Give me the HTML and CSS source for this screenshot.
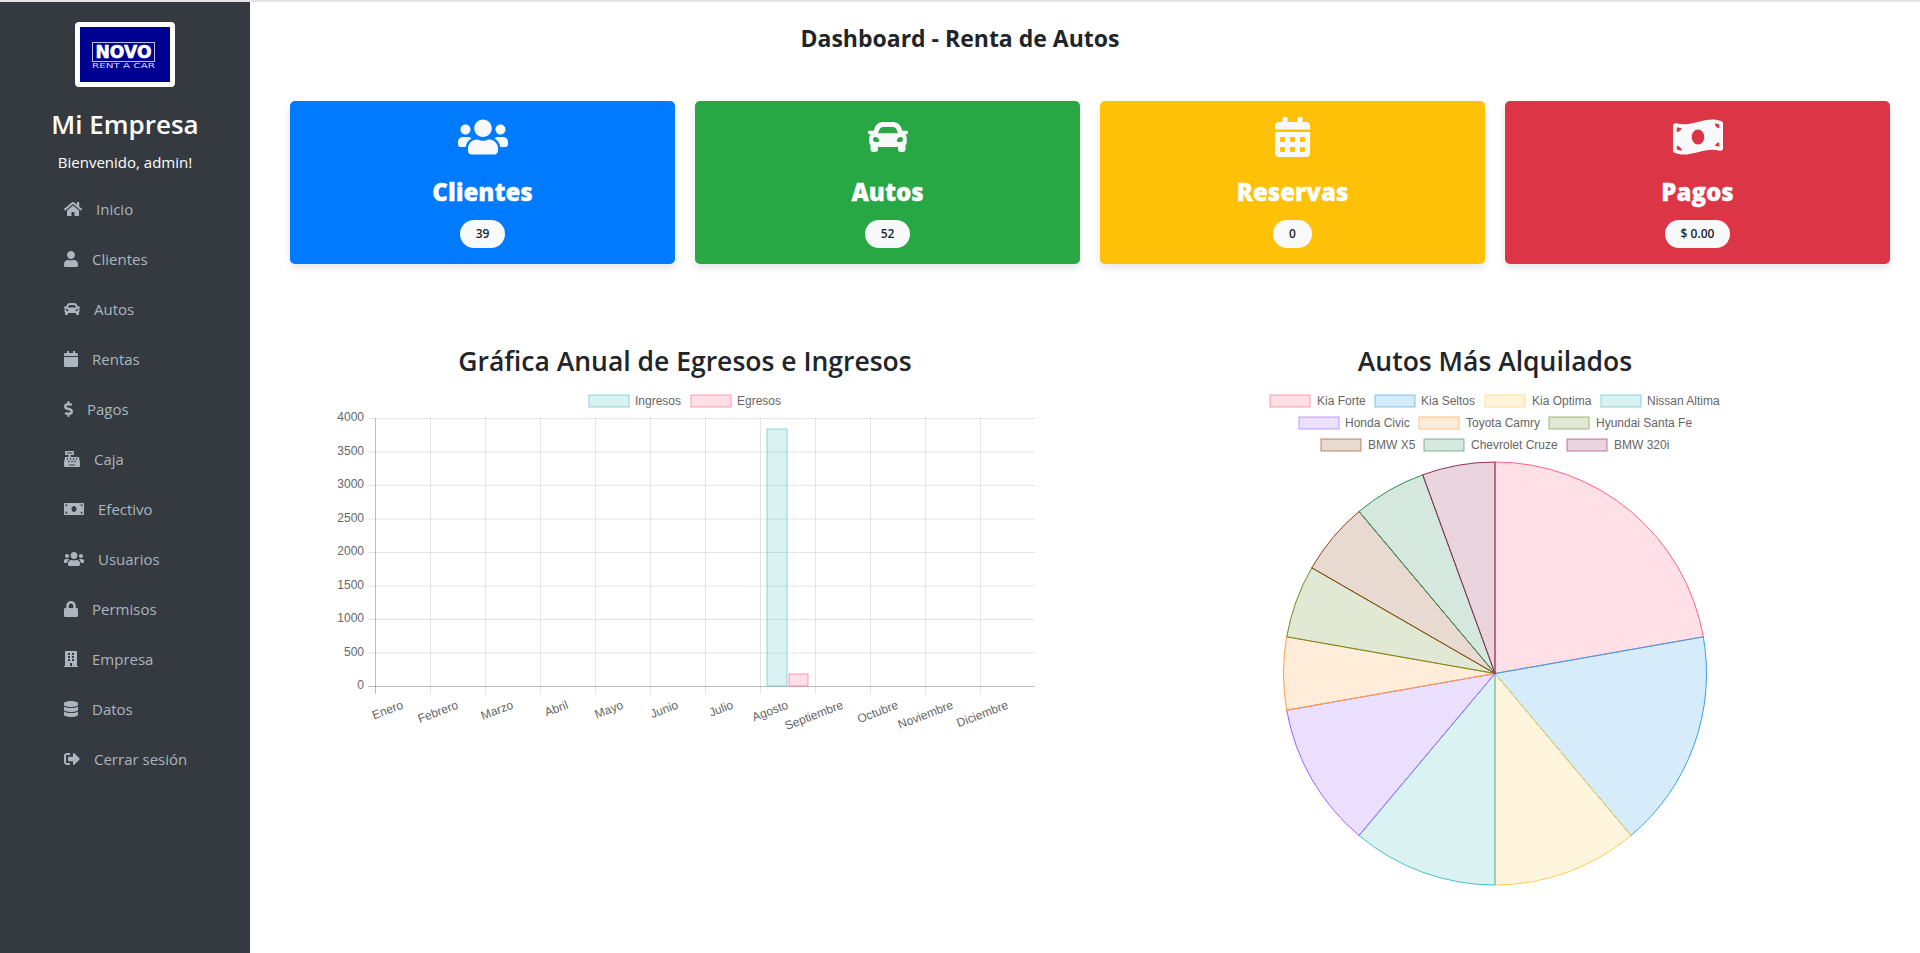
FILE: index.html
```html
<!DOCTYPE html>
<html lang="es">
    <head>
        <meta charset="UTF-8">
        <title>Dashboard - Renta de Autos</title>
        <meta name="viewport" content="width=device-width, initial-scale=1.0">
        <link rel="stylesheet" href="styles.css">
    </head>
    <body>
        <!-- icon paths, used from the sidebar and the cards -->
        <svg class="icon-defs" aria-hidden="true">
            <defs>
                <path id="i-home" d="M280.37 148.26L96 300.11V464a16 16 0 0 0 16 16l112.06-.29a16 16 0 0 0 15.92-16V368a16 16 0 0 1 16-16h64a16 16 0 0 1 16 16v95.64a16 16 0 0 0 16 16.05L464 480a16 16 0 0 0 16-16V300L295.67 148.26a12.19 12.19 0 0 0-15.3 0zM571.6 251.47L488 182.56V44.05a12 12 0 0 0-12-12h-56a12 12 0 0 0-12 12v72.61L318.47 43a48 48 0 0 0-61 0L4.34 251.47a12 12 0 0 0-1.6 16.9l25.5 31A12 12 0 0 0 45.15 301l235.22-193.74a12.19 12.19 0 0 1 15.3 0L530.9 301a12 12 0 0 0 16.9-1.6l25.5-31a12 12 0 0 0-1.7-16.93z"/>
                <path id="i-user" d="M224 256c70.7 0 128-57.3 128-128S294.7 0 224 0 96 57.3 96 128s57.3 128 128 128zm89.6 32h-16.7c-22.2 10.2-46.9 16-72.9 16s-50.6-5.8-72.9-16h-16.7C60.2 288 0 348.2 0 422.4V464c0 26.5 21.5 48 48 48h352c26.5 0 48-21.5 48-48v-41.6c0-74.2-60.2-134.4-134.4-134.4z"/>
                <path id="i-car" d="M499.99 176h-59.87l-16.64-41.6C406.38 91.63 365.57 64 319.5 64h-127c-46.06 0-86.88 27.63-103.99 70.4L71.87 176H12.01C4.2 176-1.53 183.34.37 190.91l6 24C7.7 220.25 12.5 224 18.01 224h20.07C24.65 235.73 16 252.78 16 272v48c0 16.12 6.16 30.67 16 41.93V416c0 17.67 14.33 32 32 32h32c17.67 0 32-14.33 32-32v-32h256v32c0 17.67 14.33 32 32 32h32c17.67 0 32-14.33 32-32v-54.07c9.84-11.25 16-25.8 16-41.93v-48c0-19.22-8.65-36.27-22.07-48H494c5.51 0 10.31-3.75 11.64-9.09l6-24c1.89-7.57-3.84-14.91-11.65-14.91zm-352.06-17.83c7.29-18.22 24.94-30.17 44.57-30.17h127c19.63 0 37.28 11.95 44.57 30.17L384 208H128l19.93-49.83zM96 319.8c-19.2 0-32-12.76-32-31.9S76.8 256 96 256s48 28.71 48 47.85-28.8 15.95-48 15.95zm320 0c-19.2 0-48 3.19-48-15.95S396.8 256 416 256s32 12.76 32 31.9-12.8 31.9-32 31.9z"/>
                <path id="i-calendar" d="M12 192h424c6.6 0 12 5.4 12 12v260c0 26.5-21.5 48-48 48H48c-26.5 0-48-21.5-48-48V204c0-6.6 5.4-12 12-12zm436-44v-36c0-26.5-21.5-48-48-48h-48V12c0-6.6-5.4-12-12-12h-40c-6.6 0-12 5.4-12 12v52H160V12c0-6.6-5.4-12-12-12h-40c-6.6 0-12 5.4-12 12v52H48C21.5 64 0 85.5 0 112v36c0 6.6 5.4 12 12 12h424c6.6 0 12-5.4 12-12z"/>
                <path id="i-calendar-alt" d="M0 464c0 26.5 21.5 48 48 48h352c26.5 0 48-21.5 48-48V192H0v272zm320-196c0-6.6 5.4-12 12-12h40c6.6 0 12 5.4 12 12v40c0 6.6-5.4 12-12 12h-40c-6.6 0-12-5.4-12-12v-40zm0 128c0-6.6 5.4-12 12-12h40c6.6 0 12 5.4 12 12v40c0 6.6-5.4 12-12 12h-40c-6.6 0-12-5.4-12-12v-40zM192 268c0-6.6 5.4-12 12-12h40c6.6 0 12 5.4 12 12v40c0 6.6-5.4 12-12 12h-40c-6.6 0-12-5.4-12-12v-40zm0 128c0-6.6 5.4-12 12-12h40c6.6 0 12 5.4 12 12v40c0 6.6-5.4 12-12 12h-40c-6.6 0-12-5.4-12-12v-40zM64 268c0-6.6 5.4-12 12-12h40c6.6 0 12 5.4 12 12v40c0 6.6-5.4 12-12 12H76c-6.6 0-12-5.4-12-12v-40zm0 128c0-6.6 5.4-12 12-12h40c6.6 0 12 5.4 12 12v40c0 6.6-5.4 12-12 12H76c-6.6 0-12-5.4-12-12v-40zM400 64h-48V16c0-8.8-7.2-16-16-16h-32c-8.8 0-16 7.2-16 16v48H160V16c0-8.8-7.2-16-16-16h-32c-8.8 0-16 7.2-16 16v48H48C21.5 64 0 85.5 0 112v48h448v-48c0-26.5-21.5-48-48-48z"/>
                <path id="i-dollar" d="M209.2 233.4l-108-31.6C88.7 198.2 80 186.5 80 173.5c0-16.3 13.2-29.5 29.5-29.5h66.3c12.2 0 24.2 3.7 34.2 10.5 6.1 4.1 14.3 3.1 19.5-2l34.8-34c7.1-6.9 6.1-18.4-1.8-24.5C238 74.8 207.4 64.1 176 64V16c0-8.8-7.2-16-16-16h-32c-8.8 0-16 7.2-16 16v48h-2.5C45.8 64-5.4 118.7.5 183.6c4.2 46.1 39.4 83.6 83.8 96.6l102.5 30c12.5 3.7 21.2 15.3 21.2 28.3 0 16.3-13.2 29.5-29.5 29.5h-66.3C100 368 88 364.3 78 357.5c-6.1-4.1-14.3-3.1-19.5 2l-34.8 34c-7.1 6.9-6.1 18.4 1.8 24.5 24.5 19.2 55.1 29.9 86.5 30v48c0 8.8 7.2 16 16 16h32c8.8 0 16-7.2 16-16v-48.2c46.6-.9 90.3-28.6 105.7-72.7 21.5-61.6-14.6-124.8-72.5-141.7z"/>
                <path id="i-register" d="M511.1 378.8l-26.7-160c-2.6-15.4-15.9-26.7-31.6-26.7H208v-64h96c8.8 0 16-7.2 16-16V16c0-8.8-7.2-16-16-16H48c-8.8 0-16 7.2-16 16v96c0 8.8 7.2 16 16 16h96v64H59.1c-15.6 0-29 11.3-31.6 26.7L.8 378.7c-.6 3.5-.9 7-.9 10.5V480c0 17.7 14.3 32 32 32h448c17.7 0 32-14.3 32-32v-90.7c.1-3.5-.2-7-.8-10.5zM280 248c0-8.8 7.2-16 16-16h16c8.8 0 16 7.2 16 16v16c0 8.8-7.2 16-16 16h-16c-8.8 0-16-7.2-16-16v-16zm-32 64h16c8.8 0 16 7.2 16 16v16c0 8.8-7.2 16-16 16h-16c-8.8 0-16-7.2-16-16v-16c0-8.8 7.2-16 16-16zm-32-80c8.8 0 16 7.2 16 16v16c0 8.8-7.2 16-16 16h-16c-8.8 0-16-7.2-16-16v-16c0-8.8 7.2-16 16-16h16zM80 80V48h192v32H80zm40 200h-16c-8.8 0-16-7.2-16-16v-16c0-8.8 7.2-16 16-16h16c8.8 0 16 7.2 16 16v16c0 8.8-7.2 16-16 16zm16 64v-16c0-8.8 7.2-16 16-16h16c8.8 0 16 7.2 16 16v16c0 8.8-7.2 16-16 16h-16c-8.8 0-16-7.2-16-16zm216 112c0 4.4-3.6 8-8 8H168c-4.4 0-8-3.6-8-8v-16c0-4.4 3.6-8 8-8h176c4.4 0 8 3.6 8 8v16zm24-112c0 8.8-7.2 16-16 16h-16c-8.8 0-16-7.2-16-16v-16c0-8.8 7.2-16 16-16h16c8.8 0 16 7.2 16 16v16zm48-80c0 8.8-7.2 16-16 16h-16c-8.8 0-16-7.2-16-16v-16c0-8.8 7.2-16 16-16h16c8.8 0 16 7.2 16 16v16z"/>
                <path id="i-money" d="M608 64H32C14.33 64 0 78.33 0 96v320c0 17.67 14.33 32 32 32h576c17.67 0 32-14.33 32-32V96c0-17.67-14.33-32-32-32zM48 400v-64c35.35 0 64 28.65 64 64H48zm0-224v-64h64c0 35.35-28.65 64-64 64zm272 176c-44.19 0-80-42.99-80-96 0-53.02 35.82-96 80-96s80 42.98 80 96c0 53.03-35.83 96-80 96zm272 48h-64c0-35.35 28.65-64 64-64v64zm0-224c-35.35 0-64-28.65-64-64h64v64z"/>
                <path id="i-money-wave" d="M621.16 54.46C582.37 38.19 543.55 32 504.75 32c-123.17-.01-246.33 62.34-369.5 62.34-30.89 0-61.76-3.92-92.65-13.72-3.47-1.1-6.95-1.62-10.35-1.62C15.04 79 0 92.32 0 110.81v317.26c0 12.63 7.23 24.6 18.84 29.46C57.63 473.81 96.45 480 135.25 480c123.17 0 246.34-62.35 369.51-62.35 30.89 0 61.76 3.92 92.65 13.72 3.47 1.1 6.95 1.62 10.35 1.62 17.21 0 32.25-13.32 32.25-31.81V83.93c-.01-12.64-7.24-24.6-18.85-29.47zM48 132.22c20.12 5.04 41.12 7.57 62.72 8.93C104.84 170.54 79 192.69 48 192.69v-60.47zm0 285.2v-47.78c34.37 0 62.18 27.27 63.71 61.4-22.53-1.81-43.59-6.31-63.71-13.62zM320 352c-44.19 0-80-42.99-80-96 0-53.02 35.82-96 80-96s80 42.98 80 96c0 53.03-35.83 96-80 96zm272 27.78c-17.52-4.39-35.71-6.85-54.32-8.44 5.87-26.08 27.5-45.88 54.32-49.28v57.72zm0-236.11c-30.89-3.91-54.86-29.7-55.81-61.55 19.54 2.17 38.09 6.23 55.81 12.66v48.89z"/>
                <path id="i-users" d="M96 224c35.3 0 64-28.7 64-64s-28.7-64-64-64-64 28.7-64 64 28.7 64 64 64zm448 0c35.3 0 64-28.7 64-64s-28.7-64-64-64-64 28.7-64 64 28.7 64 64 64zm32 32h-64c-17.6 0-33.5 7.1-45.1 18.6 40.3 22.1 68.9 62 75.1 109.4h66c17.7 0 32-14.3 32-32v-32c0-35.3-28.7-64-64-64zm-256 0c61.9 0 112-50.1 112-112S381.9 32 320 32 208 82.1 208 144s50.1 112 112 112zm76.8 32h-8.3c-20.8 10-43.9 16-68.5 16s-47.6-6-68.5-16h-8.3C179.6 288 128 339.6 128 403.2V432c0 26.5 21.5 48 48 48h288c26.5 0 48-21.5 48-48v-28.8c0-63.6-51.6-115.2-115.2-115.2zm-223.7-13.4C161.5 263.1 145.6 256 128 256H64c-35.3 0-64 28.7-64 64v32c0 17.7 14.3 32 32 32h65.9c6.3-47.4 34.9-87.3 75.2-109.4z"/>
                <path id="i-lock" d="M400 224h-24v-72C376 68.2 307.8 0 224 0S72 68.2 72 152v72H48c-26.5 0-48 21.5-48 48v192c0 26.5 21.5 48 48 48h352c26.5 0 48-21.5 48-48V272c0-26.5-21.5-48-48-48zm-104 0H152v-72c0-39.7 32.3-72 72-72s72 32.3 72 72v72z"/>
                <path id="i-building" d="M436 480h-20V24c0-13.3-10.7-24-24-24H56C42.7 0 32 10.7 32 24v456H12c-6.6 0-12 5.4-12 12v20h448v-20c0-6.6-5.4-12-12-12zM128 76c0-6.6 5.4-12 12-12h40c6.6 0 12 5.4 12 12v40c0 6.6-5.4 12-12 12h-40c-6.6 0-12-5.4-12-12V76zm0 96c0-6.6 5.4-12 12-12h40c6.6 0 12 5.4 12 12v40c0 6.6-5.4 12-12 12h-40c-6.6 0-12-5.4-12-12v-40zm52 148h-40c-6.6 0-12-5.4-12-12v-40c0-6.6 5.4-12 12-12h40c6.6 0 12 5.4 12 12v40c0 6.6-5.4 12-12 12zm76 160h-64v-84c0-6.6 5.4-12 12-12h40c6.6 0 12 5.4 12 12v84zm64-172c0 6.6-5.4 12-12 12h-40c-6.6 0-12-5.4-12-12v-40c0-6.6 5.4-12 12-12h40c6.6 0 12 5.4 12 12v40zm0-96c0 6.6-5.4 12-12 12h-40c-6.6 0-12-5.4-12-12v-40c0-6.6 5.4-12 12-12h40c6.6 0 12 5.4 12 12v40zm0-96c0 6.6-5.4 12-12 12h-40c-6.6 0-12-5.4-12-12V76c0-6.6 5.4-12 12-12h40c6.6 0 12 5.4 12 12v40z"/>
                <path id="i-database" d="M448 73.143v45.714C448 159.143 347.667 192 224 192S0 159.143 0 118.857V73.143C0 32.857 100.333 0 224 0s224 32.857 224 73.143zM448 176v102.857C448 319.143 347.667 352 224 352S0 319.143 0 278.857V176c48.125 33.143 136.208 48.572 224 48.572S399.874 209.143 448 176zm0 160v102.857C448 479.143 347.667 512 224 512S0 479.143 0 438.857V336c48.125 33.143 136.208 48.572 224 48.572S399.874 369.143 448 336z"/>
                <path id="i-signout" d="M497 273L329 441c-15 15-41 4.5-41-17v-96H152c-13.3 0-24-10.7-24-24v-96c0-13.3 10.7-24 24-24h136V88c0-21.4 25.9-32 41-17l168 168c9.3 9.4 9.3 24.6 0 34zM192 436v-40c0-6.6-5.4-12-12-12H96c-17.7 0-32-14.3-32-32V160c0-17.7 14.3-32 32-32h84c6.6 0 12-5.4 12-12V76c0-6.6-5.4-12-12-12H96c-53 0-96 43-96 96v192c0 53 43 96 96 96h84c6.6 0 12-5.4 12-12z"/>
            </defs>
        </svg>

        <aside class="sidebar">
            <div class="logo">
                <svg viewBox="0 0 90 55" width="90" height="55">
                    <rect width="90" height="55" fill="#000090"/>
                    <rect x="12.5" y="15.5" width="62" height="19" fill="none" stroke="#b9bfe6" stroke-width="1"/>
                    <text class="logo-name" x="43.5" y="31" textLength="56" lengthAdjust="spacingAndGlyphs">NOVO</text>
                    <text class="logo-sub" x="43.5" y="41" textLength="63" lengthAdjust="spacingAndGlyphs">RENT A CAR</text>
                </svg>
            </div>
            <h2 class="brand">Mi Empresa</h2>
            <p class="welcome">Bienvenido, admin!</p>
            <nav class="side-nav">
                <a href="#"><svg class="ico w18" viewBox="0 0 576 512"><use href="#i-home"/></svg>Inicio</a>
                <a href="#"><svg class="ico w14" viewBox="0 0 448 512"><use href="#i-user"/></svg>Clientes</a>
                <a href="#"><svg class="ico w16" viewBox="0 0 512 512"><use href="#i-car"/></svg>Autos</a>
                <a href="#"><svg class="ico w14" viewBox="0 0 448 512"><use href="#i-calendar"/></svg>Rentas</a>
                <a href="#"><svg class="ico w9" viewBox="0 0 288 512"><use href="#i-dollar"/></svg>Pagos</a>
                <a href="#"><svg class="ico w16" viewBox="0 0 512 512"><use href="#i-register"/></svg>Caja</a>
                <a href="#"><svg class="ico w20" viewBox="0 0 640 512"><use href="#i-money"/></svg>Efectivo</a>
                <a href="#"><svg class="ico w20" viewBox="0 0 640 512"><use href="#i-users"/></svg>Usuarios</a>
                <a href="#"><svg class="ico w14" viewBox="0 0 448 512"><use href="#i-lock"/></svg>Permisos</a>
                <a href="#"><svg class="ico w14" viewBox="0 0 448 512"><use href="#i-building"/></svg>Empresa</a>
                <a href="#"><svg class="ico w14" viewBox="0 0 448 512"><use href="#i-database"/></svg>Datos</a>
                <a href="#"><svg class="ico w16" viewBox="0 0 512 512"><use href="#i-signout"/></svg>Cerrar sesión</a>
            </nav>
        </aside>

        <main class="content">
            <h1 class="page-title">Dashboard - Renta de Autos</h1>

            <section class="cards">
                <div class="card card-blue">
                    <svg class="card-ico" width="50" height="40" viewBox="0 0 640 512"><use href="#i-users"/></svg>
                    <h3>Clientes</h3>
                    <span class="pill">39</span>
                </div>
                <div class="card card-green">
                    <svg class="card-ico" width="40" height="40" viewBox="0 0 512 512"><use href="#i-car"/></svg>
                    <h3>Autos</h3>
                    <span class="pill">52</span>
                </div>
                <div class="card card-yellow">
                    <svg class="card-ico" width="35" height="40" viewBox="0 0 448 512"><use href="#i-calendar-alt"/></svg>
                    <h3>Reservas</h3>
                    <span class="pill">0</span>
                </div>
                <div class="card card-red">
                    <svg class="card-ico" width="50" height="40" viewBox="0 0 640 512"><use href="#i-money-wave"/></svg>
                    <h3>Pagos</h3>
                    <span class="pill">$ 0.00</span>
                </div>
            </section>

            <section class="charts">
                <div class="chart">
                    <h2>Gráfica Anual de Egresos e Ingresos</h2>
                    <!-- viewBox is in page coordinates, easier to read off the grid -->
                    <svg class="plot" viewBox="280 385 810 375" width="810" height="375">
                        <g class="grid">
                            <path d="M368 418.5H1035M368 452H1035M368 485.5H1035M368 519H1035M368 552.5H1035M368 586H1035M368 619.5H1035M368 653H1035"/>
                            <path d="M430.5 418V694M485.5 418V694M540.5 418V694M595.5 418V694M650.5 418V694M705.5 418V694M760.5 418V694M815.5 418V694M870.5 418V694M925.5 418V694M980.5 418V694"/>
                        </g>
                        <g class="axis">
                            <path d="M375.5 418V694M368 686.5H1035"/>
                        </g>

                        <rect class="s-teal" x="767" y="429" width="20" height="257"/>
                        <rect class="s-pink" x="789" y="674" width="19" height="12"/>

                        <rect class="s-teal" x="589" y="395" width="40" height="12"/>
                        <text x="635" y="405">Ingresos</text>
                        <rect class="s-pink" x="691" y="395" width="40" height="12"/>
                        <text x="737" y="405">Egresos</text>

                        <g text-anchor="end">
                            <text x="364" y="421">4000</text>
                            <text x="364" y="455">3500</text>
                            <text x="364" y="488">3000</text>
                            <text x="364" y="522">2500</text>
                            <text x="364" y="555">2000</text>
                            <text x="364" y="589">1500</text>
                            <text x="364" y="622">1000</text>
                            <text x="364" y="656">500</text>
                            <text x="364" y="689">0</text>

                            <text transform="translate(404 708) rotate(-21)">Enero</text>
                            <text transform="translate(459 708) rotate(-21)">Febrero</text>
                            <text transform="translate(514 708) rotate(-21)">Marzo</text>
                            <text transform="translate(569 708) rotate(-21)">Abril</text>
                            <text transform="translate(624 708) rotate(-21)">Mayo</text>
                            <text transform="translate(679 708) rotate(-21)">Junio</text>
                            <text transform="translate(734 708) rotate(-21)">Julio</text>
                            <text transform="translate(789 708) rotate(-21)">Agosto</text>
                            <text transform="translate(844 708) rotate(-21)">Septiembre</text>
                            <text transform="translate(899 708) rotate(-21)">Octubre</text>
                            <text transform="translate(954 708) rotate(-21)">Noviembre</text>
                            <text transform="translate(1009 708) rotate(-21)">Diciembre</text>
                        </g>
                    </svg>
                </div>

                <div class="chart">
                    <h2>Autos Más Alquilados</h2>
                    <svg class="plot" viewBox="1090 385 810 510" width="810" height="510">
                        <rect class="p1" x="1270" y="395" width="40" height="12"/><text x="1317" y="405">Kia Forte</text>
                        <rect class="p2" x="1375" y="395" width="40" height="12"/><text x="1421" y="405">Kia Seltos</text>
                        <rect class="p3" x="1485" y="395" width="40" height="12"/><text x="1532" y="405">Kia Optima</text>
                        <rect class="p4" x="1601" y="395" width="40" height="12"/><text x="1647" y="405">Nissan Altima</text>
                        <rect class="p5" x="1299" y="417" width="40" height="12"/><text x="1345" y="427">Honda Civic</text>
                        <rect class="p6" x="1419" y="417" width="40" height="12"/><text x="1466" y="427">Toyota Camry</text>
                        <rect class="p7" x="1549" y="417" width="40" height="12"/><text x="1596" y="427">Hyundai Santa Fe</text>
                        <rect class="p8" x="1321" y="439" width="40" height="12"/><text x="1368" y="449">BMW X5</text>
                        <rect class="p9" x="1424" y="439" width="40" height="12"/><text x="1471" y="449">Chevrolet Cruze</text>
                        <rect class="p10" x="1567" y="439" width="40" height="12"/><text x="1614" y="449">BMW 320i</text>

                        <!-- slices: 4,3,2,2,2,1,1,1,1,1 of 18, clockwise from the top -->
                        <path class="p1" d="M1495 673.5V462A211.5 211.5 0 0 1 1703.3 636.8Z"/>
                        <path class="p2" d="M1495 673.5L1703.3 636.8A211.5 211.5 0 0 1 1631 835.5Z"/>
                        <path class="p3" d="M1495 673.5L1631 835.5A211.5 211.5 0 0 1 1495 885Z"/>
                        <path class="p4" d="M1495 673.5V885A211.5 211.5 0 0 1 1359 835.5Z"/>
                        <path class="p5" d="M1495 673.5L1359 835.5A211.5 211.5 0 0 1 1286.7 710.2Z"/>
                        <path class="p6" d="M1495 673.5L1286.7 710.2A211.5 211.5 0 0 1 1286.7 636.8Z"/>
                        <path class="p7" d="M1495 673.5L1286.7 636.8A211.5 211.5 0 0 1 1311.8 567.8Z"/>
                        <path class="p8" d="M1495 673.5L1311.8 567.8A211.5 211.5 0 0 1 1359 511.5Z"/>
                        <path class="p9" d="M1495 673.5L1359 511.5A211.5 211.5 0 0 1 1422.7 474.8Z"/>
                        <path class="p10" d="M1495 673.5L1422.7 474.8A211.5 211.5 0 0 1 1495 462Z"/>
                    </svg>
                </div>
            </section>
        </main>
    </body>
</html>
```

FILE: styles.css
```css
*{
    box-sizing: border-box;
}
body{
    margin: 0;
    display: flex;
    min-height: 100vh;
    border-top: 2px solid #e4e4e4;
    font-family: "Open Sans", "Noto Sans", sans-serif;
    color: #212529;
    background: #fff;
}
.icon-defs{
    position: absolute;
    width: 0;
    height: 0;
}

/*sidebar*/
.sidebar{
    width: 250px;
    flex-shrink: 0;
    padding-top: 20px;
    background-color: #343a40;
    color: #fff;
    text-align: center;
}
.logo{
    width: 100px;
    height: 65px;
    margin: 0 auto;
    border: 5px solid #fff;
    border-radius: 4px;
    overflow: hidden;
}
.logo svg{
    display: block;
}
.logo-name{
    font-family: "DejaVu Sans", sans-serif;
    font-weight: 700;
    font-size: 18px;
    fill: #fff;
    stroke: #fff;
    stroke-width: .6;
    text-anchor: middle;
}
.logo-sub{
    font-family: "DejaVu Sans", sans-serif;
    font-size: 7px;
    fill: #d5d8f0;
    text-anchor: middle;
}
.brand{
    margin: 19px 0 0;
    font-size: 26px;
    line-height: 36px;
    font-weight: 600;
}
.welcome{
    margin: 9px 0 0;
    font-size: 15px;
    line-height: 22px;
}
.side-nav{
    margin-top: 11px;
    display: flex;
    flex-direction: column;
}
.side-nav a{
    height: 50px;
    padding-left: 64px;
    display: flex;
    align-items: center;
    gap: 14px;
    font-size: 15px;
    color: #adb5bd;
    text-decoration: none;
}
.ico{
    height: 16px;
    fill: currentColor;
    flex-shrink: 0;
}
.w9{ width: 9px; }
.w14{ width: 14px; }
.w16{ width: 16px; }
.w18{ width: 18px; }
.w20{ width: 20px; }

/*main area*/
.content{
    flex: 1;
    min-width: 0;
    padding: 0 20px 0 30px;
}
.page-title{
    margin: 0;
    padding: 20px 260px 0 0;
    text-align: center;
    font-size: 23px;
    line-height: 32px;
    font-weight: 700;
}
.cards{
    margin-top: 47px;
    padding: 0 10px;
    display: grid;
    grid-template-columns: repeat(4, 1fr);
    gap: 20px;
}
.card{
    height: 163px;
    padding: 16px 0;
    border-radius: 5px;
    box-shadow: 0 4px 8px rgba(0, 0, 0, .1);
    display: flex;
    flex-direction: column;
    align-items: center;
    color: #fff;
}
.card-blue{ background-color: #007bff; }
.card-green{ background-color: #28a745; }
.card-yellow{ background-color: #ffc107; }
.card-red{ background-color: #dc3545; }
.card-ico{
    fill: #f8f9fa;
    flex-shrink: 0;
}
.card h3{
    margin: 19px 0 0;
    font-size: 24px;
    line-height: 32px;
    font-weight: 800;
    -webkit-text-stroke: .3px #fff;
}
.pill{
    margin-top: auto;
    height: 28px;
    padding: 0 16px;
    border-radius: 14px;
    background-color: #f8f9fa;
    color: #212529;
    font-size: 12px;
    font-weight: 600;
    line-height: 28px;
}

.charts{
    margin-top: 74px;
    display: grid;
    grid-template-columns: repeat(2, 1fr);
}
.chart h2{
    margin: 0;
    text-align: center;
    font-size: 26.5px;
    line-height: 47px;
    font-weight: 600;
}
.plot{
    display: block;
    font-family: "Liberation Sans", Arial, sans-serif;
    font-size: 12px;
    fill: #666;
}
.grid path{
    fill: none;
    stroke: rgba(0, 0, 0, .1);
}
.axis path{
    fill: none;
    stroke: rgba(0, 0, 0, .25);
}
.plot rect{
    stroke-opacity: .6;
}

/*chart series*/
.s-teal, .p4{ fill: rgba(75, 192, 192, .2); stroke: rgb(75, 192, 192); }
.s-pink, .p1{ fill: rgba(255, 99, 132, .2); stroke: rgb(255, 99, 132); }
.p2{ fill: rgba(54, 162, 235, .2); stroke: rgb(54, 162, 235); }
.p3{ fill: rgba(255, 206, 86, .2); stroke: rgb(255, 206, 86); }
.p5{ fill: rgba(153, 102, 255, .2); stroke: rgb(153, 102, 255); }
.p6{ fill: rgba(255, 159, 64, .2); stroke: rgb(255, 159, 64); }
.p7{ fill: rgba(107, 142, 35, .2); stroke: rgb(107, 142, 35); }
.p8{ fill: rgba(139, 69, 19, .2); stroke: rgb(139, 69, 19); }
.p9{ fill: rgba(46, 139, 87, .2); stroke: rgb(46, 139, 87); }
.p10{ fill: rgba(150, 45, 90, .2); stroke: rgb(150, 45, 90); }
```
